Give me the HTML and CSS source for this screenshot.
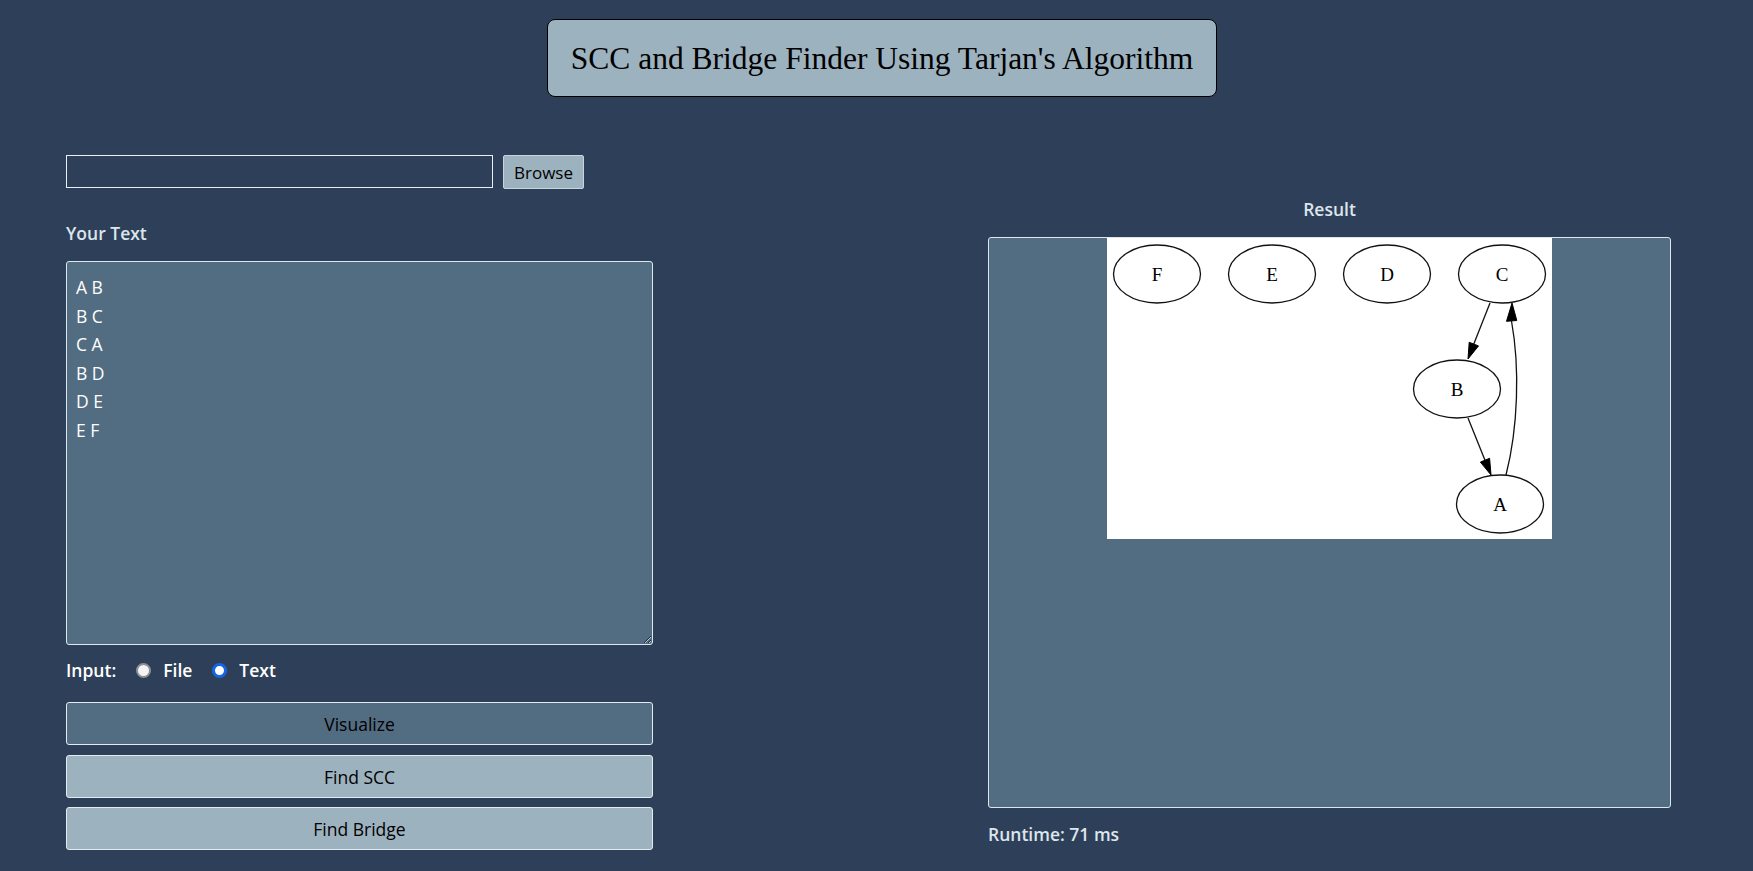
FILE: index.html
```html
<!DOCTYPE html>
<html lang="en">
<head>
<meta charset="utf-8">
<title>SCC and Bridge Finder Using Tarjan's Algorithm</title>
<link rel="stylesheet" href="styles.css">
</head>
<body>
<header class="top">
  <h1 class="title">SCC and Bridge Finder Using Tarjan's Algorithm</h1>
</header>
<main class="main">
  <section class="left">
    <div class="file-row">
      <input class="file-path" type="text" readonly>
      <button class="browse">Browse</button>
    </div>
    <div class="label">Your Text</div>
    <textarea class="edges">A B
B C
C A
B D
D E
E F</textarea>
    <div class="input-row">
      <span class="input-label">Input:</span>
      <label class="opt"><input type="radio" name="src" class="radio">File</label>
      <label class="opt"><input type="radio" name="src" class="radio" checked>Text</label>
    </div>
    <div class="actions">
      <button class="btn btn-dark">Visualize</button>
      <button class="btn">Find SCC</button>
      <button class="btn">Find Bridge</button>
    </div>
  </section>
  <section class="right">
    <div class="label center">Result</div>
    <div class="result">
      <svg class="graph" width="445" height="301" viewBox="0 0 445 301">
        <rect width="445" height="301" fill="#fff"/>
        <g fill="none" stroke="#111" stroke-width="1.3">
          <ellipse cx="50" cy="36" rx="43.5" ry="29"/>
          <ellipse cx="165" cy="36" rx="43.5" ry="29"/>
          <ellipse cx="280" cy="36" rx="43.5" ry="29"/>
          <ellipse cx="395" cy="36" rx="43.5" ry="29"/>
          <ellipse cx="350" cy="151" rx="43.5" ry="29"/>
          <ellipse cx="393" cy="266" rx="43.5" ry="29"/>
          <path d="M383,65 L366.8,106.1"/>
          <path d="M361,180 L378,222.2"/>
          <path d="M399,237 C411,190 413,130 404.5,83"/>
        </g>
        <g fill="#000" stroke="#000" stroke-width="1">
          <polygon points="361,121 371.5,107.9 362.2,104.3"/>
          <polygon points="384,237 382.6,220.3 373.4,224.1"/>
          <polygon points="405,65 409.8,82.5 399.5,83.3"/>
        </g>
        <g class="node-text" text-anchor="middle">
          <text x="50" y="42.5">F</text>
          <text x="165" y="42.5">E</text>
          <text x="280" y="42.5">D</text>
          <text x="395" y="42.5">C</text>
          <text x="350" y="157.5">B</text>
          <text x="393" y="272.5">A</text>
        </g>
      </svg>
    </div>
    <div class="label runtime">Runtime: 71 ms</div>
  </section>
</main>
</body>
</html>
```

FILE: styles.css
```css
* { box-sizing: border-box; }

html, body {
  margin: 0;
  padding: 0;
}

body {
  background: #2e4059;
  font-family: "Open Sans", "Noto Sans", sans-serif;
  color: #dde6ed;
  min-height: 871px;
}

.top {
  display: flex;
  justify-content: center;
  padding-top: 19px;
  padding-left: 11px;
}

.title {
  margin: 0;
  width: 670px;
  height: 78px;
  display: flex;
  align-items: center;
  justify-content: center;
  background: #9db2bf;
  border: 1px solid #000;
  border-radius: 8px;
  font-family: "Liberation Serif", "DejaVu Serif", serif;
  font-weight: normal;
  font-size: 31.5px;
  color: #000;
  padding-top: 2px;
}

.main {
  display: flex;
  justify-content: space-between;
  padding: 0 82px 0 66px;
  margin-top: 58px;
}

.left {
  width: 587px;
  display: flex;
  flex-direction: column;
}

.right {
  width: 683px;
  display: flex;
  flex-direction: column;
  padding-top: 42px;
}

.file-row {
  display: flex;
  gap: 10px;
  height: 34px;
}

.file-path {
  width: 427px;
  height: 33px;
  background: transparent;
  border: 1px solid #e8eef3;
  border-radius: 0;
  outline: none;
}

.browse {
  width: 81px;
  height: 34px;
  background: #9db2bf;
  border: 1px solid #c9d3da;
  border-radius: 2px;
  font-family: "Open Sans", "Noto Sans", sans-serif;
  font-size: 17px;
  color: #000;
  padding: 0;
}

.label {
  font-size: 17.5px;
  font-weight: 600;
  line-height: 24px;
  color: #dde6ed;
}

.left .label {
  margin-top: 32px;
}

.center {
  text-align: center;
}

.edges {
  margin-top: 16px;
  width: 587px;
  height: 384px;
  background: #526d82;
  border: 1px solid #dde6ed;
  border-radius: 3px;
  color: #fff;
  font-family: "Open Sans", "Noto Sans", sans-serif;
  font-size: 17.5px;
  line-height: 28.6px;
  padding: 11px 9px 8px;
  resize: both;
  outline: none;
}

.input-row {
  display: flex;
  align-items: center;
  margin-top: 13px;
  height: 24px;
  font-size: 17.5px;
  font-weight: 600;
  color: #fff;
}

.opt {
  display: inline-flex;
  align-items: center;
  gap: 12px;
  margin-left: 20px;
}

.radio {
  appearance: none;
  -webkit-appearance: none;
  width: 15px;
  height: 15px;
  margin: 0;
  border-radius: 50%;
  background: #f4f4f4;
  border: 2px solid #8e8e96;
}

.radio:checked {
  border: 3.5px solid #1466e6;
  background: #fff;
}

.actions {
  display: flex;
  flex-direction: column;
  gap: 9.5px;
  margin-top: 20px;
}

.btn {
  height: 43px;
  width: 100%;
  background: #9db2bf;
  border: 1px solid #e3eaf0;
  border-radius: 3px;
  font-family: "Open Sans", "Noto Sans", sans-serif;
  font-size: 17.5px;
  color: #000;
  padding-top: 2px;
}

.btn-dark {
  background: #526d82;
}

.result {
  margin-top: 16px;
  height: 571px;
  background: #526d82;
  border: 1px solid #dde6ed;
  border-radius: 3px;
  display: flex;
  justify-content: center;
  align-items: flex-start;
}

.graph {
  display: block;
}

.node-text {
  font-family: "Liberation Serif", "DejaVu Serif", serif;
  font-size: 19px;
  fill: #000;
}

.runtime {
  margin-top: 14px;
}
```
